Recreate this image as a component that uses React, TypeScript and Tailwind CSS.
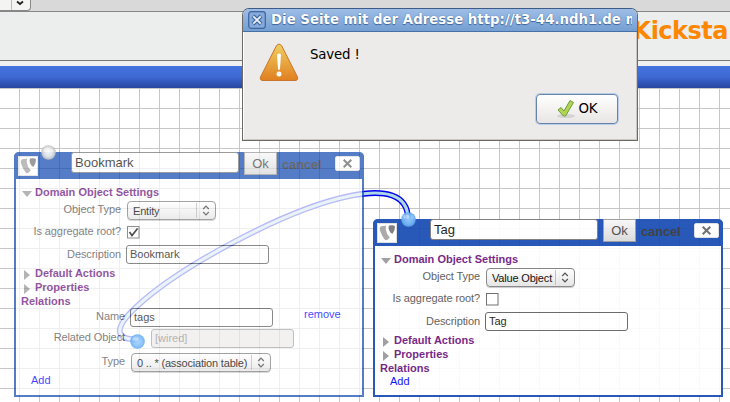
import type { ReactNode } from "react";

const sans = "font-['Liberation_Sans',Arial,sans-serif]";
const dejavu = "font-['DejaVu_Sans',Verdana,sans-serif]";

function UpDown() {
  return (
    <svg viewBox="0 0 8 11" className="h-[11px] w-2" fill="none" stroke="#444" strokeWidth="1.2">
      <path d="M1.2 4 L4 1.2 L6.8 4 M1.2 7 L4 9.8 L6.8 7" />
    </svg>
  );
}

function Select({ value, width }: { value: string; width: string }) {
  return (
    <div
      className={`flex h-[19px] items-center rounded border border-[#808080] bg-linear-to-b from-white to-[#e4e4e4] pl-[5px] text-black shadow-[0_1px_0_#ccc] ${width}`}
    >
      <span className="grow tracking-[-0.18px] whitespace-pre">{value}</span>
      <span className="flex h-[15px] w-[19px] items-center justify-center border-l border-[#bbb]">
        <UpDown />
      </span>
    </div>
  );
}

function Field({ value }: { value: string }) {
  return (
    <div className="flex h-[19px] w-[143px] items-center rounded-[3px] border border-[#606060] bg-white pb-px pl-[3px] text-[#111]">
      {value}
    </div>
  );
}

function Label({ children, wide, low }: { children: ReactNode; wide?: boolean; low?: boolean }) {
  return (
    <span
      className={`mr-[5px] shrink-0 text-right tracking-[-0.1px] text-[#555] ${low ? "-mt-px" : "-mt-[4px]"} ${wide ? "w-[109px]" : "w-[105px]"}`}
    >
      {children}
    </span>
  );
}

function Check({ checked }: { checked?: boolean }) {
  return (
    <svg viewBox="0 0 13 13" className="ml-px h-[13px] w-[13px]">
      <rect x="0.5" y="0.5" width="11.5" height="11.5" fill="#fff" stroke="#666" />
      {checked && <path d="M2.5 6 L5 9.5 L10.5 2.5" fill="none" stroke="#111" strokeWidth="1.7" />}
    </svg>
  );
}

function Heading({ open, children }: { open?: boolean; children: ReactNode }) {
  return (
    <div className="flex h-[14px] items-center pl-[6px] font-bold text-[#6c1580]">
      <svg viewBox="0 0 10 10" className="mt-[3px] mr-[3px] h-[10px] w-[10px]" fill="#999">
        <path d={open ? "M0 2 H10 L5 8 Z" : "M2 0 V10 L8 5 Z"} />
      </svg>
      {children}
    </div>
  );
}

function Logo() {
  return (
    <svg viewBox="0 0 20 20" className="h-5 w-5">
      <rect x="0.5" y="0.5" width="19" height="19" fill="#fff" stroke="#ddd" />
      <path d="M3.6 3.6 Q2.2 5 3 7.5 Q5.5 14.5 8.5 17.2 Q9.8 17.8 12.8 14.5 Q9.5 11.5 8.8 6.5 Q8.5 4 9.4 2.8 Q5 2.8 3.6 3.6 Z" fill="#a4a4a4" />
      <path d="M12 2.5 Q17.5 1.6 18 3.6 Q18.2 7 15.6 10.8 Q13.2 10.2 12 7 Q11 4 12 2.5 Z" fill="#777" />
    </svg>
  );
}

function Sphere({ blue, className }: { blue?: boolean; className: string }) {
  const id = blue ? "sphere-blue" : "sphere-gray";
  return (
    <svg viewBox="0 0 15 15" className={`absolute h-[15px] w-[15px] ${className}`}>
      <defs>
        <radialGradient id={id} cx="0.5" cy="0.5" r="0.5">
          <stop offset="0" stopColor={blue ? "#9fd0ff" : "#ffffff"} />
          <stop offset="0.6" stopColor={blue ? "#7fbefa" : "#ebebeb"} />
          <stop offset="1" stopColor={blue ? "#5fa7ee" : "#bdbdbd"} />
        </radialGradient>
      </defs>
      <circle cx="7.5" cy="7.5" r="7.3" fill={`url(#${id})`} />
      <ellipse cx="5.5" cy="4.5" rx="3" ry="2" fill="#fff" opacity="0.35" />
    </svg>
  );
}

interface ModelProps {
  title: string;
  type: string;
  typeWidth: string;
  root?: boolean;
  place: string;
  relation?: ReactNode;
}

function Model({ title, type, typeWidth, root, place, relation }: ModelProps) {
  return (
    <div className={`absolute w-[350px] rounded-t-[5px] border-2 border-t-0 border-[#164cb3] bg-white text-[11px] leading-[14px] ${place}`}>
      <div className="-mx-[2px] flex h-[27px] items-start rounded-t-[5px] bg-[#164cb3] pl-1">
        <div className="mt-1">
          <Logo />
        </div>
        <div className="ml-[33px] flex h-[21px] w-[168px] items-center rounded-[3px] border border-[#777] bg-white pl-[3px] text-[13px] text-[#111]">
          {title}
        </div>
        <div className="ml-[5px] flex h-[23px] w-[33px] items-center justify-center border border-[#999] bg-linear-to-b from-[#f8f8f8] to-[#d8d8d8] text-[13px] text-[#444]">
          Ok
        </div>
        <span className="mt-[6px] ml-[5px] w-[40px] text-[13px] font-bold tracking-[-0.15px] text-[#333]">cancel</span>
        <div className="mt-1 ml-[13px] flex h-[15px] w-[25px] items-center justify-center rounded-[2px] border border-[#ddd] bg-white">
          <svg viewBox="0 0 9 9" className="h-[9px] w-[9px]" stroke="#666" strokeWidth="2">
            <path d="M0.7 0.7 L8.3 8.3 M8.3 0.7 L0.7 8.3" />
          </svg>
        </div>
      </div>
      <div className="pt-[6px]">
        <Heading open>Domain Object Settings</Heading>
        <div className="mt-[2px] flex h-[19px] items-center">
          <Label>Object Type</Label>
          <div className="ml-px">
            <Select value={type} width={typeWidth} />
          </div>
        </div>
        <div className="mt-[3px] flex h-[19px] items-center">
          <Label>Is aggregate root?</Label>
          <Check checked={root} />
        </div>
        <div className="mt-[3px] flex h-[19px] items-center">
          <Label low>Description</Label>
          <Field value={title} />
        </div>
        <div className="h-[2px]" />
        <Heading>Default Actions</Heading>
        <Heading>Properties</Heading>
        <div className="h-[14px] pl-[5px] font-bold text-[#6c1580]">Relations</div>
        {relation}
        <div className="-mt-px h-[20px] pl-[15px] text-[#0000ff]">Add</div>
      </div>
    </div>
  );
}

function Dialog() {
  return (
    <div className={`absolute top-[8px] left-[242px] flex h-[133px] w-[396px] flex-col overflow-hidden rounded-t-[7px] border border-[#6d6967] border-t-[#3d5b86] bg-[#edebe9] text-black ${dejavu}`}>
      <div className="flex h-[23px] shrink-0 items-center border-b border-[#4570a8] bg-linear-to-b from-[#9dbde6] to-[#759fd2] pr-[4px] pl-[5px]">
        <svg viewBox="0 0 18 18" className="h-[18px] w-[18px] shrink-0" fill="none">
          <rect x="0.7" y="0.7" width="16.6" height="16.6" rx="2.5" fill="#84a9da" stroke="#3e659c" strokeWidth="1.2" />
          <path d="M5 5 L13 13 M13 5 L5 13" stroke="#3e659c" strokeWidth="4" />
          <path d="M5.3 5.3 L12.7 12.7 M12.7 5.3 L5.3 12.7" stroke="#e8f0fa" strokeWidth="1.8" />
        </svg>
        <div className="ml-[5px] h-[20px] w-[361px] shrink-0 overflow-hidden text-[13.33px] leading-[20px] font-bold whitespace-nowrap text-white [text-shadow:0_0_1px_#3e659c,0_1px_1px_#3e659c]">
          Die Seite mit der Adresse http://t3-44.ndh1.de m
        </div>
      </div>
      <div className="flex grow flex-col border-r border-b border-[#cbc7c3] border-l border-l-white">
        <div className="flex h-[62px] pt-[11px] pl-[15px]">
          <svg viewBox="0 0 40 39" className="h-[39px] w-10">
            <defs>
              <linearGradient id="warn" x1="0" y1="0" x2="0" y2="1">
                <stop offset="0" stopColor="#efcf62" />
                <stop offset="1" stopColor="#e07f20" />
              </linearGradient>
            </defs>
            <path d="M17.5 2.5 Q20 -0.5 22.5 2.5 L38.5 34 Q39.5 37.5 36 37.5 H4 Q0.5 37.5 1.5 34 Z" fill="url(#warn)" stroke="#c9742c" />
            <path d="M18 11.5 Q20 9.5 22 11.5 L21 26 Q20 28 19 26 Z" fill="#fff" />
            <circle cx="20" cy="31" r="2.5" fill="#fff" />
          </svg>
          <span className="ml-[11px] text-[13.33px] leading-[23px] tracking-[-0.15px]">Saved !</span>
        </div>
        <div className="flex justify-end pr-[18px]">
          <div className="flex h-[30px] w-[82px] items-center justify-center rounded-[4px] border border-[#6484ad] bg-linear-to-b from-white to-[#e8e6e4] text-[13.33px] shadow-[0_0_0_1px_#b9cde6]">
            <svg viewBox="0 0 20 20" className="h-5 w-5">
              <ellipse cx="10" cy="17" rx="9" ry="2" fill="#bbb" opacity="0.5" />
              <path d="M2 11 L5 8.5 L8 12 L14 1.5 L17.5 3.5 L9.5 17 L7.5 17 Z" fill="#b2d555" stroke="#6c9a34" strokeLinejoin="round" />
            </svg>
            <span className="ml-[2px]">OK</span>
          </div>
        </div>
      </div>
    </div>
  );
}

export default function App() {
  return (
    <div className={`relative flex h-[402px] w-[730px] flex-col overflow-hidden bg-white ${sans}`}>
      <div className="h-[12px] border-b border-[#868686] bg-[#d9d9d9]">
        <div className="flex h-[11px] w-[31px] rounded-br-[4px] border-r border-b border-[#888] bg-[#f4f4f2]">
          <div className="w-[12px] border-r border-[#bbb]" />
          <svg viewBox="0 0 18 10" className="h-[10px] w-[18px]" fill="none" stroke="#222" strokeWidth="1.8">
            <path d="M5 1.5 L8 4 L11 1.5" />
          </svg>
        </div>
      </div>
      <div className={`flex h-[49px] justify-end border-b border-[#777] bg-[#eceeed] pr-[2px] text-[24px] leading-[39px] font-bold tracking-[-0.5px] text-[#ff8700] ${dejavu}`}>
        Kicksta
      </div>
      <div className="h-[5px] bg-[#eff1f0]" />
      <div className="h-[22px] bg-linear-to-b from-[#4474e0] via-[#3e68d2] to-[#2846a0]" />
      <div className="grow bg-[linear-gradient(#c6c6c6_1px,transparent_1px),linear-gradient(90deg,#c6c6c6_1px,transparent_1px)] bg-[size:20px_20px] bg-[position:19px_0px]" />

      <svg viewBox="0 0 730 402" className="absolute inset-0 h-[402px] w-[730px]" fill="none">
        <path d="M138 339.5 C34 340 408 119 408 219" stroke="#0000ee" strokeWidth="5.8" />
        <path d="M138 339.5 C34 340 408 119 408 219" stroke="#add8e6" strokeWidth="3.2" />
      </svg>

      <Model
        title="Bookmark"
        type="Entity"
        typeWidth="w-[89px]"
        root
        place="top-[152px] left-[14px] h-[245px] opacity-73"
        relation={
          <div className="h-[66px]">
            <div className="flex h-[19px] items-center">
              <Label wide>Name</Label>
              <Field value="tags" />
              <span className="-mt-[7px] ml-[31px] text-[#0000ff]">remove</span>
            </div>
            <div className="mt-[2px] flex h-[19px] items-center">
              <Label wide>Related Object</Label>
              <div className="ml-[21px] flex h-[19px] w-[143px] items-center rounded-[3px] border border-[#aaa] bg-[#eeecea] pb-px pl-[3px] text-[#999]">
                [wired]
              </div>
            </div>
            <div className="mt-[5px] flex h-[19px] items-center">
              <Label wide>Type</Label>
              <div className="ml-px">
                <Select value="0 .. * (association table)" width="w-[140px]" />
              </div>
            </div>
          </div>
        }
      />
      <Model
        title="Tag"
        type="Value Object"
        typeWidth="w-[89px]"
        place="top-[219px] left-[373px] h-[178px] opacity-92"
      />
      <Sphere className="top-[145px] left-[41px] opacity-90" />
      <Sphere blue className="top-[334px] left-[130px] opacity-85" />
      <Sphere blue className="top-[212px] left-[401px] opacity-90" />
      <Dialog />
    </div>
  );
}
